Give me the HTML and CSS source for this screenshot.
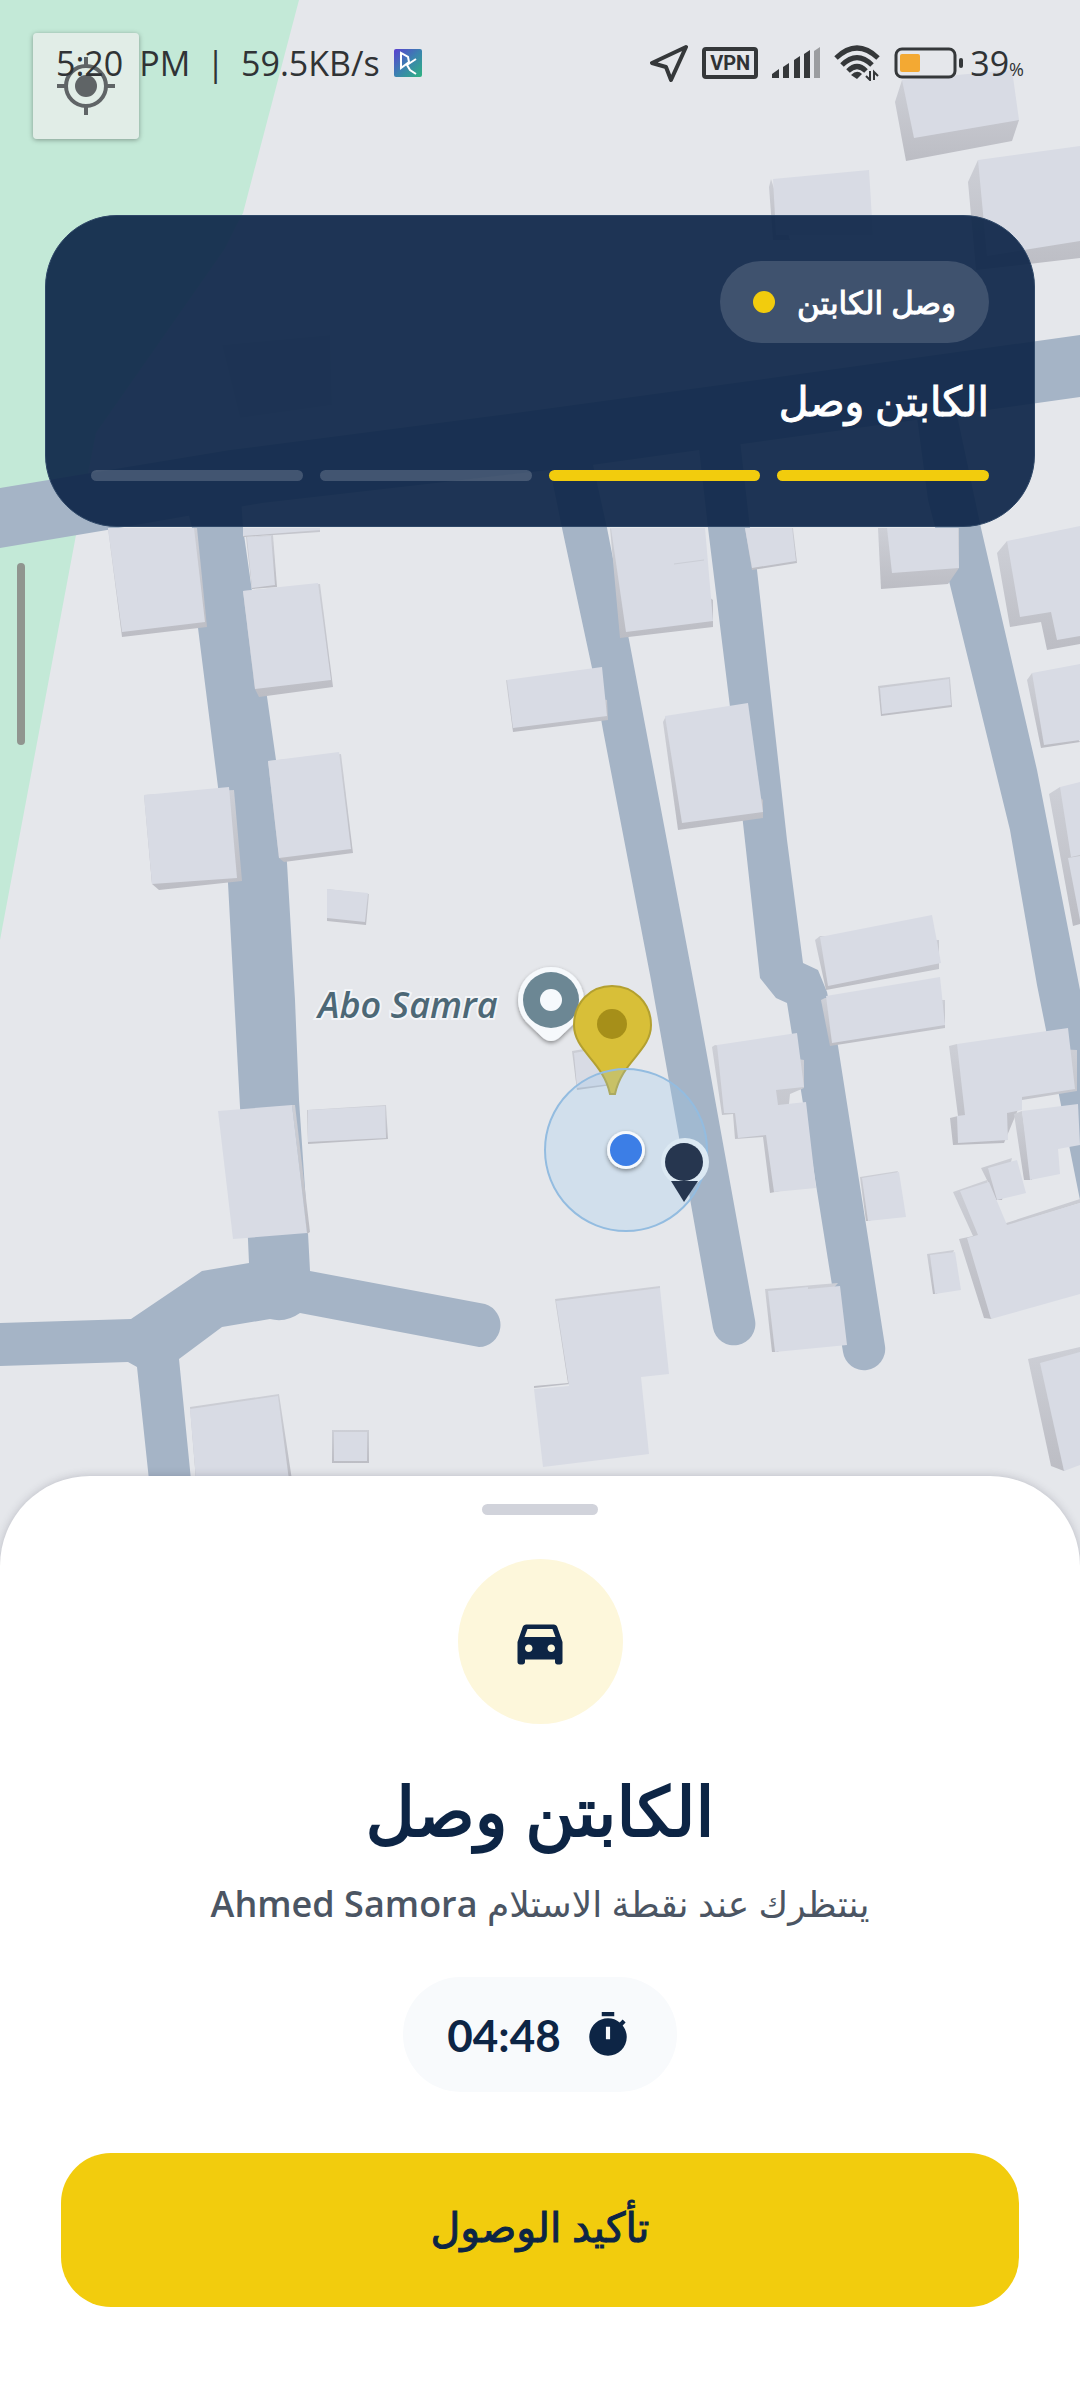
FILE: index.html
```html
<!DOCTYPE html>
<html lang="ar" dir="rtl">
<head>
<meta charset="utf-8">
<meta name="viewport" content="width=device-width, initial-scale=1">
<title>الكابتن وصل</title>
<link rel="stylesheet" href="styles.css">
</head>
<body>
<div class="screen">
  <svg class="map" viewBox="0 0 1080 2400" preserveAspectRatio="xMidYMin slice" role="img" aria-label="Abo Samra">
    <defs>
      <linearGradient id="wall" x1="0" y1="0" x2="0" y2="1">
        <stop offset="0" stop-color="#cdcfd6"/>
        <stop offset="1" stop-color="#bcbdc4"/>
      </linearGradient>
      <filter id="soft" x="-30%" y="-30%" width="160%" height="160%">
        <feDropShadow dx="0" dy="2" stdDeviation="2" flood-opacity=".4"/>
      </filter>
    </defs>
    <path class="park" d="M0 0H299L243 213 224 250 131 383 96 433 76 535 0 940z"/>
    <g class="roads">
      <path d="M0 488 230 450 500 415 778 377 1080 335V397L592 465 262 503 107 530 0 548z"/>
      <path d="M180 480H240L243 528 276 760 287 863 295 1000 299 1100 308 1233 310 1271 485 1304A22 22 0 0 1 479 1347L300 1313Q286 1323 270 1319L222 1327 179 1359 191 1480H149L137 1367 128 1362 0 1366V1323L131 1319 202 1271 249 1263 248 1240 240 1107 228 883 218 787 198 628 192 528z"/>
      <path d="M548 460H592L607 528 630 645 697 1000 755 1320A21 21 0 0 1 713 1328L651 980 603 730 592 668 562 528z"/>
      <path d="M698 440H740L750 528 757 570 787 840 803 963 818 970 827 992 838 1046 885 1346A21 21 0 0 1 843 1352L832 1285 787 1003 776 998 760 978 746 850 731 715 708 528z"/>
      <path d="M916 410H956L981 528 1037 770 1080 990V1200L1037 985 1010 830 950 585 928 500z"/>
    </g>
    <g class="walls">
      <path d="M902 80 895 102 906 161 1012 141 1019 120z"/>
      <path d="M978 160 968 182 976 270 1080 258V220z"/>
      <path d="M771 179 769 187 773 240H790z"/>
      <path d="M108 528 122 637 207 627 197 528z"/>
      <path d="M243 528V537L320 532V528z"/>
      <path d="M246 537 252 589 277 587 273 535z"/>
      <path d="M243 591 255 689 259 697 333 687 320 584z"/>
      <path d="M268 761 279 858 284 862 353 853 341 754z"/>
      <path d="M144 795 152 884 159 890 242 881 234 790z"/>
      <path d="M327 889V921L366 925 369 894z"/>
      <path d="M292 1105 307 1234 310 1232 295 1105z"/>
      <path d="M307 1110 308 1144 388 1139 386 1105z"/>
      <path d="M190 1407 279 1394 292 1480H196z"/>
      <path d="M332 1430H369V1463H332z"/>
      <path d="M555 1299 660 1286V1300L570 1384 534 1388V1386L568 1383z"/>
      <path d="M506 680 513 732 608 720 607 700z"/>
      <path d="M610 528 620 638 713 627V600z"/>
      <path d="M745 528 752 570 797 563 793 528z"/>
      <path d="M666 716 663 722 678 830 763 818V800z"/>
      <path d="M878 528 881 589 948 584 959 568V528z"/>
      <path d="M1007 541 997 553 1010 627 1041 622 1047 650 1080 644V541z"/>
      <path d="M878 686 950 677 952 707 881 716z"/>
      <path d="M1032 673 1027 680 1041 748 1080 742z"/>
      <path d="M1060 787 1049 794 1073 926 1080 924V787z"/>
      <path d="M820 936 815 940 826 990 939 969V940z"/>
      <path d="M825 998 821 1000 830 1046 945 1028V1000z"/>
      <path d="M715 1045 712 1047 722 1115 733 1114 735 1139 763 1137 770 1193 780 1191 790 1094 804 1088V1060z"/>
      <path d="M957 1044 949 1046 958 1116 950 1118 953 1145 1004 1143 1022 1100 1077 1091V1050z"/>
      <path d="M1022 1111 1014 1114 1024 1180H1032z"/>
      <path d="M1012 1158 981 1168 988 1182 996 1200H1002z"/>
      <path d="M987 1180 953 1192 973 1236 959 1239 984 1318 992 1319 1010 1225 1080 1203V1199L1000 1225z"/>
      <path d="M898 1171 860 1177 866 1221H870z"/>
      <path d="M954 1250 927 1254 933 1294H937z"/>
      <path d="M838 1283 765 1289 772 1352H778z"/>
      <path d="M1080 1347 1028 1359 1051 1466 1064 1471 1080 1460z"/>
      <path d="M572 1051 602 1046 612 1085 577 1090z"/>
    </g>
    <g class="roofs">
      <path d="M902 80 1012 70 1019 120 914 138z"/>
      <path d="M978 160 1080 146V241L987 256z"/>
      <path d="M773 179 869 170 873 235H776z"/>
      <path d="M222 345 330 335 332 405 240 418z"/>
      <path d="M108 528H194L205 622 122 632z"/>
      <path d="M243 528H320V530L243 536z"/>
      <path d="M247 537 271 536 275 585 252 588z"/>
      <path d="M243 591 318 583 331 680 255 689z"/>
      <path d="M268 761 339 752 351 849 279 858z"/>
      <path d="M144 795 229 787 237 878 152 884z"/>
      <path d="M327 889 368 893 365 922 327 918z"/>
      <path d="M218 1111 292 1105 307 1233 233 1239z"/>
      <path d="M308 1110 385 1106 386 1138 308 1142z"/>
      <path d="M190 1409 278 1396 289 1480H196z"/>
      <path d="M334 1432H367V1461H334z"/>
      <path d="M556 1301 660 1288 669 1374 641 1377 649 1454 543 1467 534 1389 569 1386z"/>
      <path d="M507 680 602 667 607 716 513 728z"/>
      <path d="M611 528H705L713 621 626 632z"/>
      <path d="M745 528H792L796 561 752 568z"/>
      <path d="M665 716 748 703 763 812 682 823z"/>
      <path d="M887 528H958L959 568 892 573z"/>
      <path d="M1007 541 1080 526V636L1057 640 1051 612 1020 617z"/>
      <path d="M880 688 949 679 951 705 882 714z"/>
      <path d="M1032 673 1080 664V740L1044 745z"/>
      <path d="M1060 787 1080 782V855L1071 857zM1068 858 1080 856V920z"/>
      <path d="M820 937 932 915 941 963 828 986z"/>
      <path d="M826 996 940 977 945 1025 832 1043z"/>
      <path d="M717 1045 797 1033 804 1087 776 1090 778 1105 806 1102 816 1188 774 1192 766 1135 738 1138 735 1113 724 1113z"/>
      <path d="M957 1044 1068 1028 1075 1089 1022 1097V1110L1007 1113 1008 1140 958 1143 957 1116 965 1115z"/>
      <path d="M1022 1111 1078 1104 1080 1145 1058 1149 1060 1174 1030 1180z"/>
      <path d="M988 1168 1017 1160 1026 1193 997 1200z"/>
      <path d="M960 1191 989 1182 1007 1225 1080 1203V1294L991 1319 967 1238 978 1235z"/>
      <path d="M862 1178 899 1172 906 1217 868 1221z"/>
      <path d="M930 1255 955 1252 961 1290 935 1294z"/>
      <path d="M768 1291 808 1287V1289L840 1286 847 1345 775 1352z"/>
      <path d="M1040 1363 1080 1352V1465L1064 1471z"/>
      <path d="M574 1053 602 1048 610 1084 577 1088z"/>
    </g>
    <path class="seam" d="M674 564 704 560"/>
    <g filter="url(#soft)">
      <path class="halo" d="M551 967a33 33 0 0 1 25 54.500L560 1037Q551 1045 542 1037L526 1021.500A33 33 0 0 1 551 967z"/>
    </g>
    <circle class="place" cx="551" cy="1000" r="28"/>
    <circle class="halo" cx="551" cy="1000" r="11"/>
    <text class="place-name" x="318" y="1018">Abo Samra</text>
    <path class="pickup" d="M612 986C590 986 574 1003 574 1025 574 1051 603 1061 610 1094H615C622 1061 651 1051 651 1025 651 1003 634 986 612 986z"/>
    <circle class="pickup-core" cx="612" cy="1024" r="15"/>
    <circle class="accuracy" cx="626" cy="1150" r="81"/>
    <g filter="url(#soft)"><circle class="halo" cx="626" cy="1150" r="19"/></g>
    <circle class="me" cx="626" cy="1150" r="16"/>
    <circle class="halo-soft" cx="685" cy="1162" r="24"/>
    <circle class="captain" cx="684" cy="1162" r="19"/>
    <path class="captain" d="M671 1181H698L684 1202z"/>
  </svg>

  <button class="locate" type="button" aria-label="موقعي">
    <svg viewBox="0 0 60 60" width="60" height="60"><circle cx="30" cy="30" r="20" fill="none" stroke="#5f6466" stroke-width="4"/><circle cx="30" cy="30" r="11" fill="#5f6466"/><path d="M1 30h8M51 30h8M30 1v8M30 51v8" stroke="#5f6466" stroke-width="4"/></svg>
  </button>
  <div class="side-handle"></div>

  <div class="status" dir="ltr">
    <span class="clock group"><span>5:20</span><span>PM</span><span>|</span><span>59.5KB/s</span></span>
    <svg class="app" viewBox="0 0 28 28" width="28" height="28"><defs><linearGradient id="app" x1="0" y1="0" x2="1" y2="1"><stop offset="0" stop-color="#5a3fd0"/><stop offset=".5" stop-color="#3b82b0"/><stop offset="1" stop-color="#2fb380"/></linearGradient></defs><rect width="28" height="28" rx="2" fill="url(#app)"/><path d="M7 4v15l8-6-1-5zM22 10l-9 6 3 5 6 4" fill="none" stroke="#fff" stroke-width="2"/></svg>
    <span class="spacer"></span>
    <svg viewBox="0 0 38 38" width="38" height="38"><path d="M36 3 2 19l14 4 5 13z" fill="none" stroke="#35383a" stroke-width="4" stroke-linejoin="round"/></svg>
    <span class="vpn">VPN</span>
    <svg viewBox="0 0 48 32" width="48" height="32"><path d="M0 31v-4l7-5v9zM11 31V20l6-4v15zM22 31V13l6-4v22zM32 31V7l6-4v28z" fill="#35383a"/><path d="M42 31V4l6-4v31z" fill="#9b9da0"/></svg>
    <svg viewBox="0 0 46 36" width="46" height="36"><g fill="none" stroke="#35383a" stroke-width="5"><path d="M2 13Q23-7 44 13"/><path d="M8 20Q23 5 38 20"/><path d="M14 26Q23 17 32 26"/></g><path d="M17 30Q23 24 28 29L23 34z" fill="#35383a"/><path d="M36 26v9l-4-4M40 35v-8l4 4" stroke="#35383a" stroke-width="2" fill="none"/></svg>
    <span class="battery">
      <svg viewBox="0 0 70 32" width="70" height="32"><rect x="2" y="2" width="59" height="28" rx="6" fill="none" stroke="#35383a" stroke-width="3"/><rect x="6" y="7" width="20" height="18" rx="2" fill="#f3a933"/><rect x="65" y="11" width="4" height="10" rx="2" fill="#35383a"/></svg>
      <span class="clock">39<small>%</small></span>
    </span>
  </div>

  <section class="trip">
    <span class="chip"><span>وصل الكابتن</span><i class="dot"></i></span>
    <h2 class="trip-title">الكابتن وصل</h2>
    <div class="steps"><i class="step on"></i><i class="step on"></i><i class="step"></i><i class="step"></i></div>
  </section>

  <main class="sheet">
    <div class="grip"></div>
    <div class="badge">
      <svg viewBox="0 0 24 24" width="60" height="60"><path fill="#0d2545" d="M18.920 6.010C18.720 5.420 18.160 5 17.500 5h-11c-.66 0-1.210.42-1.420 1.010L3 12v8c0 .55.45 1 1 1h1c.55 0 1-.45 1-1v-1h12v1c0 .55.45 1 1 1h1c.55 0 1-.45 1-1v-8l-2.080-5.990zM7.500 16c-.83 0-1.500-.67-1.500-1.500S6.670 13 7.500 13s1.500.67 1.500 1.500S8.330 16 7.500 16zm9 0c-.83 0-1.500-.67-1.500-1.500s.67-1.500 1.500-1.500 1.500.67 1.500 1.500-.67 1.500-1.500 1.500zM5.800 10 7 6.800h10L18.200 10z"/></svg>
    </div>
    <h1 class="title">الكابتن وصل</h1>
    <p class="subtitle">ينتظرك عند نقطة الاستلام <bdi>Ahmed Samora</bdi></p>
    <div class="timer">
      <svg viewBox="0 0 24 24" width="50" height="50"><path fill="#0d2545" fill-rule="evenodd" d="M15 1H9v2h6V1zM19.030 7.390l1.420-1.420c-.43-.51-.9-.99-1.410-1.410l-1.420 1.420C16.070 4.740 14.120 4 12 4c-4.970 0-9 4.030-9 9s4.020 9 9 9 9-4.030 9-9c0-2.120-.74-4.070-1.970-5.610zM11 14V8h2v6z"/></svg>
      <time dir="ltr">04:48</time>
    </div>
    <button class="confirm" type="button">تأكيد الوصول</button>
  </main>
</div>
</body>
</html>
```
FILE: styles.css
```css
* { box-sizing: border-box; }

body {
  margin: 0;
  background: #fff;
  color: #0d2545;
  font-family: "Open Sans", "DejaVu Sans", sans-serif;
}

.screen {
  position: relative;
  display: flex;
  flex-direction: column;
  min-height: 100vh;
  overflow: hidden;
  background: #e5e7eb;
}

/* Map */
.map {
  position: absolute;
  inset: 0;
  width: 100%;
  height: 100%;
  direction: ltr;
}
.park { fill: #c3e9d7; }
.roads { fill: #a5b4c6; }
.walls { fill: url(#wall); }
.roofs { fill: #d8dbe4; }
.seam { stroke: #cbced6; stroke-width: 1; }
.halo { fill: #f6f9fc; }
.halo-soft { fill: #dce9f3; }
.place { fill: #6c8794; }
.place-name {
  fill: #4d6876;
  stroke: #f3f5f8;
  stroke-width: 4;
  paint-order: stroke;
  font: italic 600 36px "Open Sans", sans-serif;
}
.pickup { fill: #d8bf38; stroke: #b3a030; stroke-width: 2; }
.pickup-core { fill: #a68f19; }
.accuracy { fill: rgba(150, 200, 240, .25); stroke: #93bce0; stroke-width: 2; }
.me { fill: #3c7ee6; }
.captain { fill: #26364f; }

.locate {
  position: absolute;
  left: 33px;
  top: 33px;
  width: 106px;
  height: 106px;
  padding: 0;
  display: grid;
  place-items: center;
  border: 0;
  border-radius: 4px;
  background: rgba(240, 238, 240, .66);
  box-shadow: 0 1px 5px rgba(0, 0, 0, .35);
}
.side-handle {
  position: absolute;
  left: 17px;
  top: 563px;
  width: 8px;
  height: 182px;
  border-radius: 4px;
  background: #90958f;
}

/* Status bar */
.status {
  position: relative;
  display: flex;
  align-items: center;
  gap: 14px;
  height: 126px;
  padding: 0 56px;
  color: #303335;
  pointer-events: none;
}
.spacer { flex: 1; }
.clock { font: 400 34px "Open Sans", sans-serif; }
.clock small { font-size: 18px; }
.group { display: flex; gap: 16px; }
.battery { display: flex; align-items: center; gap: 6px; }
.vpn {
  padding: 0 4px;
  border: 4px solid #35383a;
  border-radius: 4px;
  font: 700 20px/24px Roboto, sans-serif;
}

/* Trip card */
.trip {
  position: relative;
  display: flex;
  flex-direction: column;
  align-items: flex-start;
  margin: 89px 45px 0;
  padding: 45px;
  border: 1px solid #2e4767;
  border-radius: 72px;
  background: rgba(13, 37, 72, .92);
  color: #fff;
}
.chip {
  display: flex;
  align-items: center;
  gap: 22px;
  height: 82px;
  padding: 0 33px;
  border-radius: 41px;
  background: rgba(255, 255, 255, .15);
  font-size: 31px;
  -webkit-text-stroke: 1px currentColor;
}
.dot { width: 22px; height: 22px; border-radius: 11px; background: #f2cc0d; }
.trip-title {
  margin: 17px 0 30px;
  font-size: 41px;
  line-height: 80px;
  font-weight: 400;
  -webkit-text-stroke: 1px currentColor;
}
.steps { display: flex; gap: 17px; width: 100%; }
.step { flex: 1; height: 11px; border-radius: 6px; background: rgba(255, 255, 255, .18); }
.step.on { background: #f2cc0d; }

/* Bottom sheet */
.sheet {
  position: relative;
  display: flex;
  flex-direction: column;
  align-items: center;
  margin-top: auto;
  padding: 28px 61px 93px;
  border-radius: 90px 90px 0 0;
  background: #fff;
  box-shadow: 0 0 8px rgba(60, 60, 80, .25);
}
.grip { width: 116px; height: 11px; border-radius: 6px; background: #d1d3db; }
.badge {
  display: grid;
  place-items: center;
  width: 165px;
  height: 165px;
  margin-top: 44px;
  border-radius: 50%;
  background: #fdf7db;
}
.title {
  margin: 40px 0 0;
  font-size: 68px;
  line-height: 92px;
  font-weight: 400;
  -webkit-text-stroke: 2px currentColor;
}
.subtitle { margin: 18px 0 0; font-size: 36px; line-height: 60px; color: #4b5563; }
.subtitle bdi { font-weight: 600; }
.timer {
  display: flex;
  align-items: center;
  gap: 22px;
  height: 115px;
  margin-top: 43px;
  padding: 0 44px;
  border-radius: 58px;
  background: #f8fafc;
  font: 700 44px Lato, sans-serif;
}
.confirm {
  width: 100%;
  height: 154px;
  margin-top: 61px;
  padding: 0 0 8px;
  border: 0;
  border-radius: 50px;
  background: #f2cc0d;
  color: #0d2545;
  font: 400 41px "Open Sans", "DejaVu Sans", sans-serif;
  -webkit-text-stroke: 1px currentColor;
}
```
